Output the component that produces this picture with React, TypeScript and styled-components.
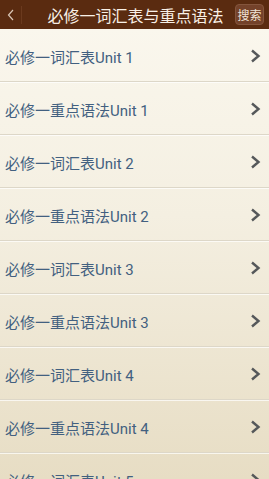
import React from "react";
import styled, { createGlobalStyle } from "styled-components";

const Global = createGlobalStyle`
  html, body { margin: 0; padding: 0; }
  body {
    width: 269px;
    height: 479px;
    overflow: hidden;
    font-family: Roboto, "Noto Sans CJK SC", sans-serif;
  }
`;

const Screen = styled.div`
  width: 269px;
  height: 479px;
  display: flex;
  flex-direction: column;
  overflow: hidden;
  background: linear-gradient(180deg, #fbf8ef 0%, #f4efe1 45%, #e7ddc4 100%);
`;

const Header = styled.header`
  height: 29px;
  flex: 0 0 29px;
  display: flex;
  align-items: center;
  background: #5a2b10;
`;

const BackBtn = styled.div`
  width: 22px;
  height: 18px;
  display: flex;
  align-items: center;
  justify-content: center;
  border-right: 1px solid #6b3a1e;
  box-sizing: border-box;
`;

const Title = styled.h1`
  flex: 1;
  margin: 0;
  text-align: center;
  font-size: 16px;
  font-weight: 400;
  color: #f8f0e6;
  padding-left: 14px;
  font-family: "Noto Sans CJK SC", sans-serif;
`;

const SearchBtn = styled.div`
  width: 29px;
  height: 21px;
  margin-right: 5px;
  border-radius: 4px;
  background: #74422a;
  border: 1px solid #84553c;
  box-sizing: border-box;
  display: flex;
  align-items: center;
  justify-content: center;
  color: #f1e4d8;
  font-size: 12px;
  font-family: "Noto Sans CJK SC", sans-serif;
`;

const List = styled.div`
  display: flex;
  flex-direction: column;
`;

const Row = styled.div`
  height: 53px;
  flex: 0 0 53px;
  box-sizing: border-box;
  display: flex;
  align-items: center;
  justify-content: space-between;
  padding: 2px 8px 0 5px;
  border-bottom: 1px solid #ddd7c8;
  box-shadow: 0 1px 0 rgba(255, 255, 255, 0.7);
`;

const Label = styled.span`
  font-size: 15px;
  color: #426080;
  font-family: Roboto, "Noto Sans CJK SC", sans-serif;
`;

const Chevron = () => (
  <svg width="11" height="14" viewBox="0 0 11 14">
    <path d="M2 1.5 L8.5 7 L2 12.5" fill="none" stroke="#55585a" strokeWidth="2.4" />
  </svg>
);

const items = [
  "必修一词汇表Unit 1",
  "必修一重点语法Unit 1",
  "必修一词汇表Unit 2",
  "必修一重点语法Unit 2",
  "必修一词汇表Unit 3",
  "必修一重点语法Unit 3",
  "必修一词汇表Unit 4",
  "必修一重点语法Unit 4",
  "必修一词汇表Unit 5",
];

export default function App() {
  return (
    <>
      <Global />
      <Screen>
        <Header>
          <BackBtn>
            <svg width="8" height="12" viewBox="0 0 8 12">
              <path d="M6 1 L1.5 6 L6 11" fill="none" stroke="#d9c6b6" strokeWidth="1.2" />
            </svg>
          </BackBtn>
          <Title>必修一词汇表与重点语法</Title>
          <SearchBtn>搜索</SearchBtn>
        </Header>
        <List>
          {items.map((t) => (
            <Row key={t}>
              <Label>{t}</Label>
              <Chevron />
            </Row>
          ))}
        </List>
      </Screen>
    </>
  );
}
